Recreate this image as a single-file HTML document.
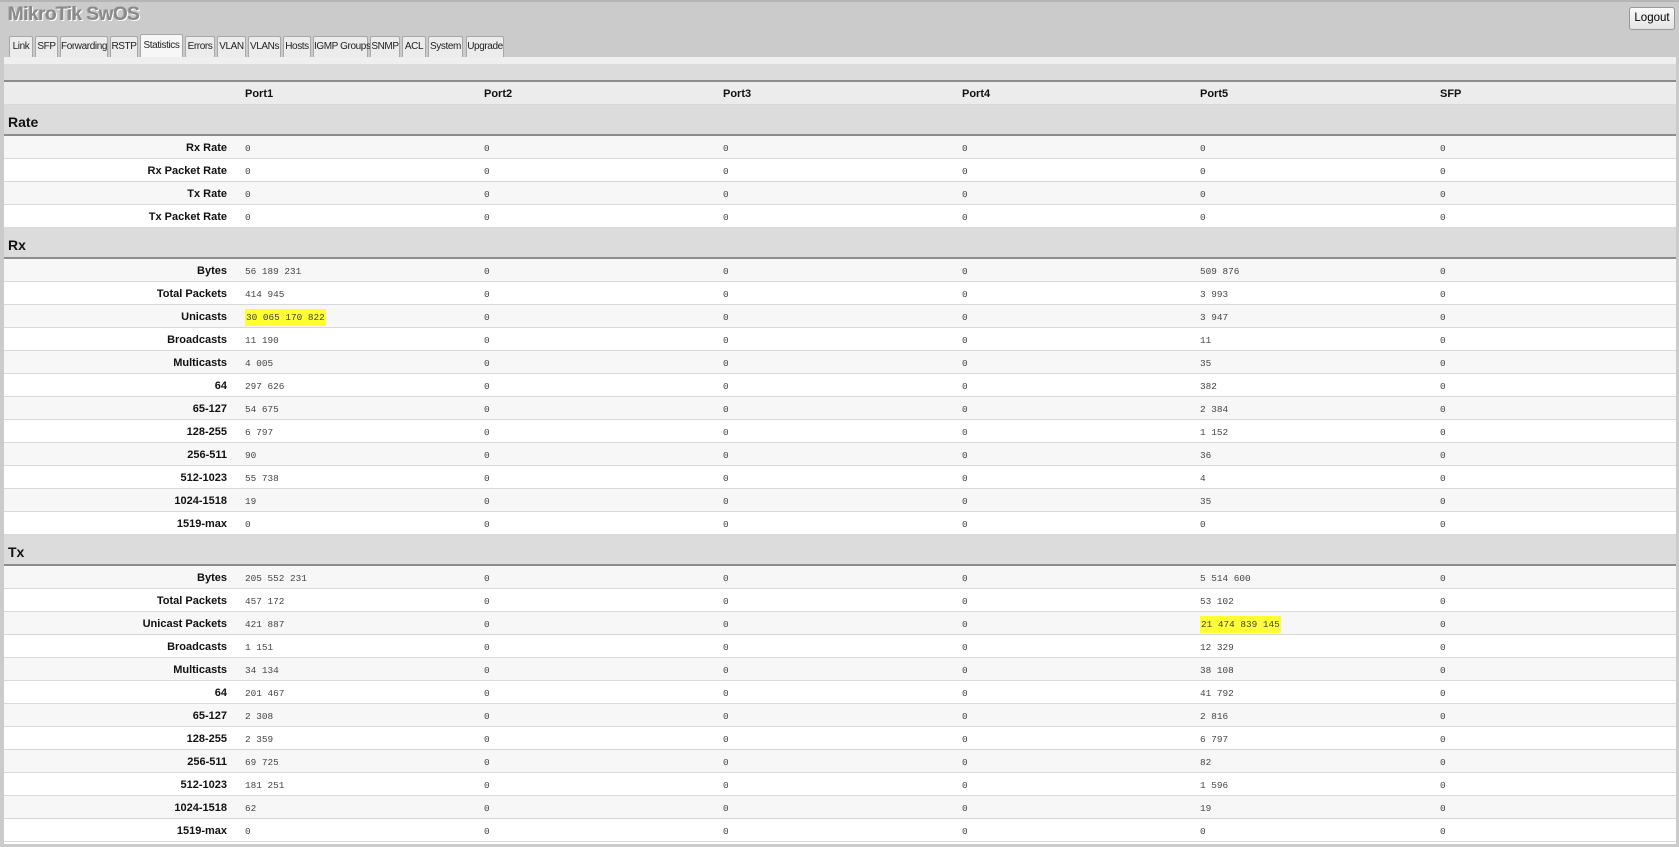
<!DOCTYPE html>
<html><head><meta charset="utf-8"><style>
*{margin:0;padding:0;box-sizing:border-box}
body{width:1679px;height:847px;background:#cbcbcb;font-family:"Liberation Sans",sans-serif;position:relative;overflow:hidden}
.topline{position:absolute;left:0;top:0;width:100%;height:2px;background:#b5b5b5}
.title{position:absolute;left:8px;top:4px;font-size:19px;font-weight:bold;color:#8a8a8a;text-shadow:1px 1px 0 #fff,-1px 0 0 #aaa;letter-spacing:-0.5px}
.logout{position:absolute;left:1629px;top:7px;width:46px;height:23px;border:1px solid #999;border-radius:3px;background:linear-gradient(#fafafa,#e4e4e4);font-size:11.5px;text-align:center;line-height:21px;color:#000}
.tab{position:absolute;top:36px;height:21px;border:1px solid #a8a8a8;border-bottom:none;background:#ececec;font-size:10px;letter-spacing:-0.4px;text-align:center;line-height:20px;color:#222;border-radius:2px 2px 0 0;white-space:nowrap}
.tab.a{top:34px;height:23px;background:#f7f7f7;line-height:22px}
.content{position:absolute;left:4px;top:57px;width:1672px;height:787px;background:#fff}
.strip{position:absolute;left:0;top:0;width:100%;height:7px;background:#efefef}
.band0{position:absolute;left:0;top:7px;width:100%;height:18px;background:#dcdcdc;border-bottom:2px solid #8c8c8c}
.hdr{position:absolute;left:0;top:25px;width:100%;height:23px;background:#ececec;border-bottom:1px solid #d8d8d8}
.hdr span{position:absolute;top:6px;font-size:11px;font-weight:bold;color:#111}
.sec{position:absolute;left:0;width:100%;background:#dcdcdc;border-bottom:2px solid #8c8c8c}
.sec span{position:absolute;left:4px;bottom:4px;font-size:14px;font-weight:bold;color:#111}
.r{position:absolute;left:0;width:100%;height:23px;border-bottom:1px solid #d9d9d9;background:#fff}
.r.g{background:#f7f7f7}
.r b{position:absolute;right:1449px;top:6px;font-size:11px;color:#111;white-space:nowrap}
.r i{position:absolute;top:7px;font-style:normal;font-family:"Liberation Mono",monospace;font-size:9.4px;color:#444;white-space:pre}
.r i:nth-of-type(1){left:241px}.r i:nth-of-type(2){left:480px}.r i:nth-of-type(3){left:719px}
.r i:nth-of-type(4){left:958px}.r i:nth-of-type(5){left:1196px}.r i:nth-of-type(6){left:1436px}
.hl{background:#ffff33;padding:3px 1px}
</style></head><body>
<div class="topline"></div>
<div class="title">MikroTik SwOS</div>
<div class="logout">Logout</div>
<div class="tab" style="left:9px;width:24px">Link</div>
<div class="tab" style="left:35px;width:23px">SFP</div>
<div class="tab" style="left:60px;width:48px">Forwarding</div>
<div class="tab" style="left:110px;width:28px">RSTP</div>
<div class="tab a" style="left:140px;width:43px">Statistics</div>
<div class="tab" style="left:185px;width:30px">Errors</div>
<div class="tab" style="left:217px;width:29px">VLAN</div>
<div class="tab" style="left:248px;width:33px">VLANs</div>
<div class="tab" style="left:283px;width:28px">Hosts</div>
<div class="tab" style="left:313px;width:55px">IGMP Groups</div>
<div class="tab" style="left:370px;width:30px">SNMP</div>
<div class="tab" style="left:402px;width:24px">ACL</div>
<div class="tab" style="left:428px;width:35px">System</div>
<div class="tab" style="left:466px;width:38px">Upgrade</div>
<div class="content">
<div class="strip"></div><div class="band0"></div>
<div class="hdr"><span style="left:241px">Port1</span><span style="left:480px">Port2</span><span style="left:719px">Port3</span><span style="left:958px">Port4</span><span style="left:1196px">Port5</span><span style="left:1436px">SFP</span></div>
<div class="sec" style="top:48px;height:31px"><span>Rate</span></div>
<div class="r g" style="top:79px"><b>Rx Rate</b><i>0</i><i>0</i><i>0</i><i>0</i><i>0</i><i>0</i></div>
<div class="r" style="top:102px"><b>Rx Packet Rate</b><i>0</i><i>0</i><i>0</i><i>0</i><i>0</i><i>0</i></div>
<div class="r g" style="top:125px"><b>Tx Rate</b><i>0</i><i>0</i><i>0</i><i>0</i><i>0</i><i>0</i></div>
<div class="r" style="top:148px"><b>Tx Packet Rate</b><i>0</i><i>0</i><i>0</i><i>0</i><i>0</i><i>0</i></div>
<div class="sec" style="top:171px;height:31px"><span>Rx</span></div>
<div class="r g" style="top:202px"><b>Bytes</b><i>56 189 231</i><i>0</i><i>0</i><i>0</i><i>509 876</i><i>0</i></div>
<div class="r" style="top:225px"><b>Total Packets</b><i>414 945</i><i>0</i><i>0</i><i>0</i><i>3 993</i><i>0</i></div>
<div class="r g" style="top:248px"><b>Unicasts</b><i><span class="hl">30 065 170 822</span></i><i>0</i><i>0</i><i>0</i><i>3 947</i><i>0</i></div>
<div class="r" style="top:271px"><b>Broadcasts</b><i>11 190</i><i>0</i><i>0</i><i>0</i><i>11</i><i>0</i></div>
<div class="r g" style="top:294px"><b>Multicasts</b><i>4 005</i><i>0</i><i>0</i><i>0</i><i>35</i><i>0</i></div>
<div class="r" style="top:317px"><b>64</b><i>297 626</i><i>0</i><i>0</i><i>0</i><i>382</i><i>0</i></div>
<div class="r g" style="top:340px"><b>65-127</b><i>54 675</i><i>0</i><i>0</i><i>0</i><i>2 384</i><i>0</i></div>
<div class="r" style="top:363px"><b>128-255</b><i>6 797</i><i>0</i><i>0</i><i>0</i><i>1 152</i><i>0</i></div>
<div class="r g" style="top:386px"><b>256-511</b><i>90</i><i>0</i><i>0</i><i>0</i><i>36</i><i>0</i></div>
<div class="r" style="top:409px"><b>512-1023</b><i>55 738</i><i>0</i><i>0</i><i>0</i><i>4</i><i>0</i></div>
<div class="r g" style="top:432px"><b>1024-1518</b><i>19</i><i>0</i><i>0</i><i>0</i><i>35</i><i>0</i></div>
<div class="r" style="top:455px"><b>1519-max</b><i>0</i><i>0</i><i>0</i><i>0</i><i>0</i><i>0</i></div>
<div class="sec" style="top:478px;height:31px"><span>Tx</span></div>
<div class="r g" style="top:509px"><b>Bytes</b><i>205 552 231</i><i>0</i><i>0</i><i>0</i><i>5 514 600</i><i>0</i></div>
<div class="r" style="top:532px"><b>Total Packets</b><i>457 172</i><i>0</i><i>0</i><i>0</i><i>53 102</i><i>0</i></div>
<div class="r g" style="top:555px"><b>Unicast Packets</b><i>421 887</i><i>0</i><i>0</i><i>0</i><i><span class="hl">21 474 839 145</span></i><i>0</i></div>
<div class="r" style="top:578px"><b>Broadcasts</b><i>1 151</i><i>0</i><i>0</i><i>0</i><i>12 329</i><i>0</i></div>
<div class="r g" style="top:601px"><b>Multicasts</b><i>34 134</i><i>0</i><i>0</i><i>0</i><i>38 108</i><i>0</i></div>
<div class="r" style="top:624px"><b>64</b><i>201 467</i><i>0</i><i>0</i><i>0</i><i>41 792</i><i>0</i></div>
<div class="r g" style="top:647px"><b>65-127</b><i>2 308</i><i>0</i><i>0</i><i>0</i><i>2 816</i><i>0</i></div>
<div class="r" style="top:670px"><b>128-255</b><i>2 359</i><i>0</i><i>0</i><i>0</i><i>6 797</i><i>0</i></div>
<div class="r g" style="top:693px"><b>256-511</b><i>69 725</i><i>0</i><i>0</i><i>0</i><i>82</i><i>0</i></div>
<div class="r" style="top:716px"><b>512-1023</b><i>181 251</i><i>0</i><i>0</i><i>0</i><i>1 596</i><i>0</i></div>
<div class="r g" style="top:739px"><b>1024-1518</b><i>62</i><i>0</i><i>0</i><i>0</i><i>19</i><i>0</i></div>
<div class="r" style="top:762px"><b>1519-max</b><i>0</i><i>0</i><i>0</i><i>0</i><i>0</i><i>0</i></div>
</div>
</body></html>
